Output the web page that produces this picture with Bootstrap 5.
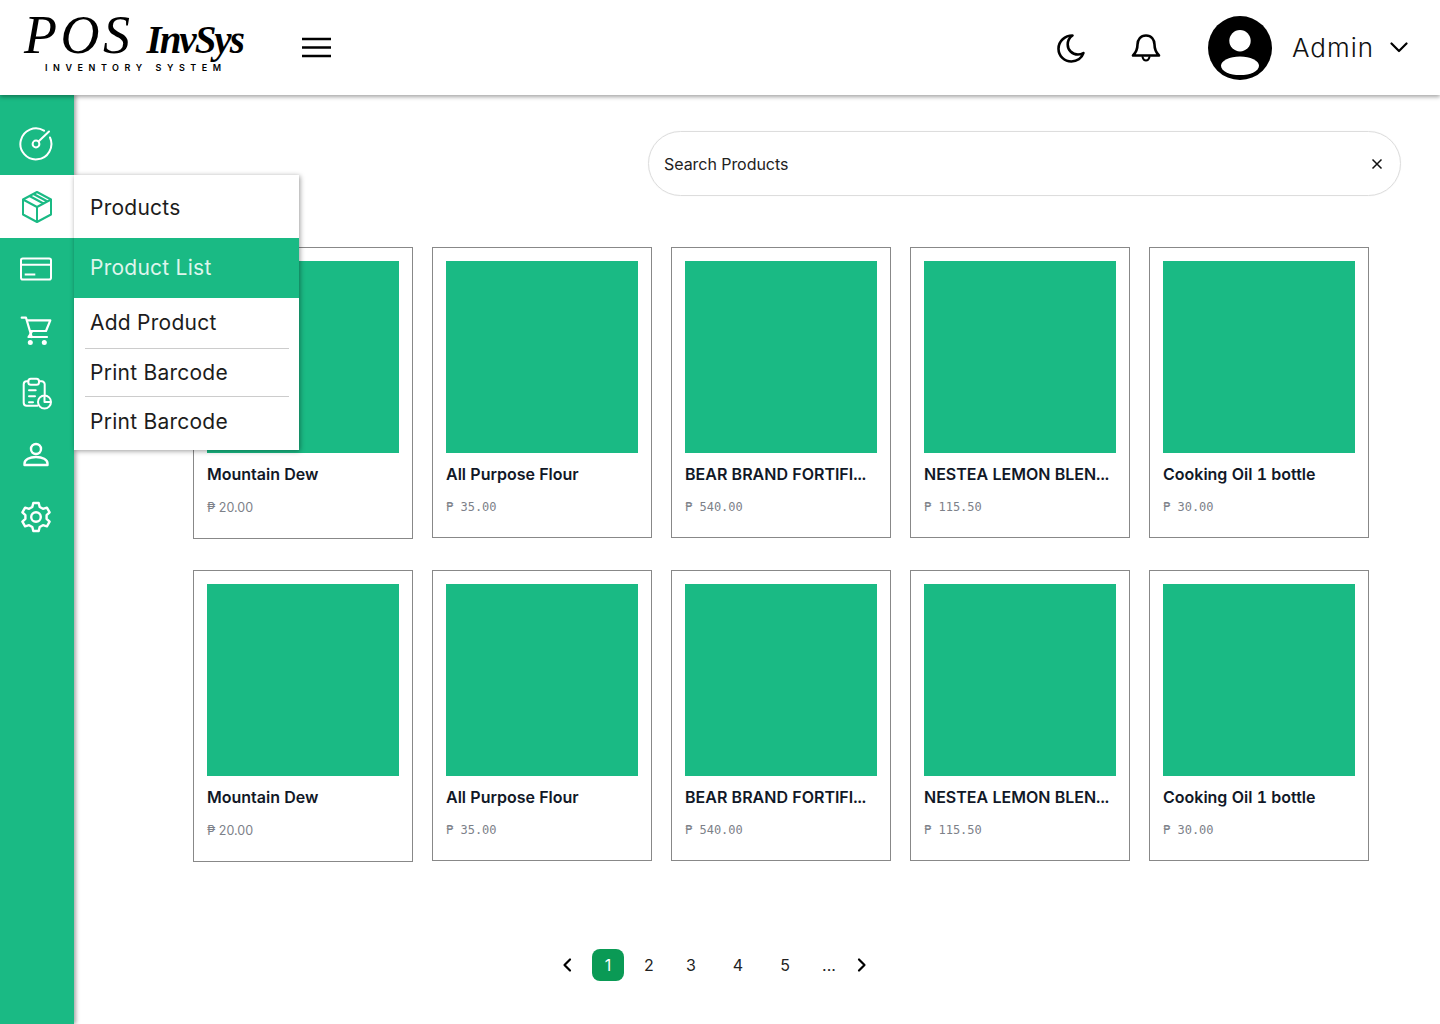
<!DOCTYPE html>
<html lang="en">
<head>
  <meta charset="UTF-8" />
  <meta name="viewport" content="width=device-width, initial-scale=1.0"/>
  <title>POS InvSys - Products</title>
  <link href="https://cdn.jsdelivr.net/npm/bootstrap@5.3.2/dist/css/bootstrap.min.css" rel="stylesheet"/>
  <style>
    body {
      font-family: 'Inter', sans-serif;
      height: 1024px;
      overflow: hidden;
      background: #fff;
    }

    .top-bar {
      height: 95px;
      padding: 0 32px 0 24px;
      background: #fff;
      box-shadow: 0 2px 4px rgba(0,0,0,0.35);
      position: relative;
      z-index: 3;
      flex-wrap: nowrap;
    }

    .brand-box { width: 278px; color: #000; padding-bottom: 8px; }
    .brand-name {
      font-family: 'Liberation Serif', serif;
      font-style: italic;
      font-size: 54px;
      line-height: 40px;
      letter-spacing: 3.5px;
      white-space: nowrap;
    }
    .brand-name b { font-size: 39px; font-weight: 700; letter-spacing: -2px; margin-left: 13px; }
    .brand-tag {
      font-family: 'Inter', sans-serif;
      font-size: 9px;
      font-weight: 600;
      line-height: 11px;
      letter-spacing: 5.55px;
      margin: 2px 0 0 21px;
      white-space: nowrap;
    }

    .burger { width: 29px; height: 21px; display: block; }
    .top-icon { width: 32px; height: 32px; display: block; }
    .moon-gap { margin-right: 43px; }
    .bell-gap { margin-right: 46px; }
    .admin-name {
      font-family: 'Inter', sans-serif;
      font-size: 26px;
      font-weight: 300;
      letter-spacing: 1px;
      color: #111;
      margin: 0 16px 0 20px;
    }

    .side-rail {
      width: 74px;
      height: 929px;
      flex-shrink: 0;
      padding-top: 18px;
      background: #1aba84;
      box-shadow: 2px 0 4px rgba(0,0,0,0.35);
      position: relative;
      z-index: 2;
    }
    .rail-item {
      height: 62px;
      padding-right: 2px;
      color: #fff;
    }
    .rail-item.is-active { height: 63px; background: #fff; color: #1aba84; }
    .rail-item svg { width: 34px; height: 34px; }

    .side-menu.dropdown-menu {
      display: block;
      position: absolute;
      left: 74px;
      top: 80px;
      width: 225px;
      height: 275px;
      padding: 0;
      margin: 0;
      border: 0;
      border-radius: 0;
      box-shadow: 1px 1px 5px rgba(0,0,0,0.4);
      z-index: 4;
    }
    .side-menu .dropdown-item {
      font-family: 'Inter', sans-serif;
      font-size: 21px;
      font-weight: 400;
      letter-spacing: .25px;
      color: #1c1c1c;
      padding: 0 16px;
    }
    .side-menu .menu-head { height: 63px; line-height: 65px; }
    .side-menu .dropdown-item.active { height: 60px; line-height: 60px; background: #1aba84; color: #dff5ec; }
    .side-menu .row-add { height: 50px; line-height: 50px; }
    .side-menu .row-print { height: 47px; line-height: 47px; }
    .side-menu .row-last { height: 53px; line-height: 50px; }
    .side-menu .dropdown-divider { margin: 0 10px 0 11px; border-color: #ccc; opacity: 1; }

    .main-area { padding: 36px 39px 0 119px; }

    .search-pill {
      width: 753px;
      height: 65px;
      padding: 0 16px 0 15px;
      margin-bottom: 51px;
      border: 1px solid #ddd;
      border-radius: 33px;
      box-shadow: 0 0 1px rgba(0,0,0,0.1);
      font-size: 16px;
      letter-spacing: -.05px;
      color: #222;
      align-self: flex-end;
    }
    .search-pill svg { width: 12px; height: 12px; margin-right: 1px; }

    .item-grid {
      display: grid;
      grid-template-columns: repeat(5, 220px);
      column-gap: 19px;
      row-gap: 31px;
      align-items: start;
    }
    .item-box {
      padding: 13px 13px 21px;
      border: 1px solid #888;
      border-radius: 0;
    }
    .item-pic { height: 192px; background: #1aba84; }
    .item-title {
      margin: 10px 0 13px;
      font-size: 16px;
      font-weight: 600;
      line-height: 22px;
      letter-spacing: 0;
      font-feature-settings: "tnum";
      color: #111827;
      white-space: nowrap;
    }
    .item-price {
      font-family: 'DejaVu Sans Mono', monospace;
      font-size: 12px;
      line-height: 18px;
      color: #7d8189;
    }
    .item-price.plain {
      font-family: 'Inter', sans-serif;
      font-size: 12.5px;
      line-height: 19px;
    }

    .pager-row { margin: 87px 0 0 358px; }
    .pager-row .page-item .page-link {
      display: flex;
      align-items: center;
      justify-content: center;
      width: 32px;
      height: 32px;
      margin-left: 0;
      padding: 0;
      border: 0;
      border-radius: 8px;
      background: none;
      font-size: 16px;
      color: #222;
    }
    .pager-row .page-item.active .page-link { background: #0a9a55; color: #fff; }
    .pager-row svg { width: 16px; height: 16px; }
    .gap-a { margin-right: 9px; }
    .gap-b { margin-right: 10px; }
    .gap-c { margin-right: 15px; }
    .gap-d { margin-right: 12px; }
    .gap-e { margin-right: 1px; }
  </style>
</head>
<body>

  <nav class="navbar top-bar d-flex align-items-center">
    <div class="brand-box">
      <div class="brand-name">POS<b>InvSys</b></div>
      <div class="brand-tag">INVENTORY SYSTEM</div>
    </div>
    <svg class="burger" viewBox="0 0 29 21" fill="none" stroke="#000" stroke-width="2.4"><path d="M0 2h29M0 10.500h29M0 19h29"/></svg>

    <div class="ms-auto d-flex align-items-center">
      <svg class="top-icon moon-gap" viewBox="0 0 32 32" fill="none" stroke="#000" stroke-width="2.600" stroke-linejoin="round" stroke-linecap="round"><path d="M17.500 3.500C10 3.500 3.500 9 3.500 16.700 3.500 24 9.500 29.500 16.400 29.500c5.500 0 10.300-3.200 12-8.500-1.700 1-3.500 1.500-5.400 1.500-6 0-10.300-4.600-10.300-10 0-3.500 1.800-7 4.800-9z"/></svg>
      <svg class="top-icon bell-gap" viewBox="0 0 32 32" fill="none" stroke="#000" stroke-width="2.600" stroke-linejoin="round" stroke-linecap="round"><path d="M16 3.500c-5.500 0-8.500 4.300-8.500 9 0 6-2 8.500-4.500 11h26c-2.500-2.500-4.500-5-4.500-11 0-4.700-3-9-8.500-9z"/><path d="M12.500 25c.6 2.300 2 3.500 3.500 3.500s2.900-1.200 3.500-3.500" stroke-width="2"/></svg>
      <svg width="64" height="64" viewBox="0 0 64 64"><circle cx="32" cy="32" r="32" fill="#000"/><circle cx="32" cy="24.700" r="10.700" fill="#fff"/><ellipse cx="32" cy="49.800" rx="19" ry="9.300" fill="#fff"/></svg>
      <span class="admin-name">Admin</span>
      <svg width="18" height="11" viewBox="0 0 18 11" fill="none" stroke="#000" stroke-width="2.200" stroke-linecap="round" stroke-linejoin="round"><path d="M1.500 1.500 9 9l7.500-7.500"/></svg>
    </div>
  </nav>

  <div class="d-flex position-relative">
    <aside class="side-rail d-flex flex-column">
      <div class="rail-item d-flex align-items-center justify-content-center">
        <svg viewBox="0 0 34 34" fill="none" stroke="currentColor" stroke-width="2" stroke-linecap="round"><path d="M25 3.700A15.500 15.500 0 1 0 31 10.500"/><circle cx="17" cy="17" r="3.400"/><path d="M19.500 14.500 30 4.500"/></svg>
      </div>
      <div class="rail-item is-active d-flex align-items-center justify-content-center">
        <svg viewBox="0 0 34 34" fill="none" stroke="currentColor" stroke-width="2" stroke-linejoin="round"><path d="M18 2 32 9.500v15L18 32 4 24.500v-15z"/><path d="M4 9.500 18 17l14-7.500M18 17v15M10.500 6l14 7.500M14.500 4l14 7.500"/></svg>
      </div>
      <div class="rail-item d-flex align-items-center justify-content-center">
        <svg viewBox="0 0 34 34" fill="none" stroke="currentColor" stroke-width="2" stroke-linejoin="round"><rect x="2" y="6.500" width="30" height="21" rx="1.800"/><path d="M2 12.700h30M5.700 22.500h10.600"/></svg>
      </div>
      <div class="rail-item d-flex align-items-center justify-content-center">
        <svg viewBox="0 0 34 34" fill="none" stroke="currentColor" stroke-width="2.200" stroke-linecap="round" stroke-linejoin="round"><path d="M2.700 3.700H7l5.700 19.300"/><path d="M8.700 6.300h22.600L27 17H11.700"/><path d="M12.700 18 9.500 23H28"/><circle cx="11.300" cy="28.500" r="2.500" fill="currentColor" stroke="none"/><circle cx="25.300" cy="28.500" r="2.500" fill="currentColor" stroke="none"/></svg>
      </div>
      <div class="rail-item d-flex align-items-center justify-content-center">
        <svg viewBox="0 0 34 34" fill="none" stroke="currentColor" stroke-width="2" stroke-linecap="round" stroke-linejoin="round"><path d="M9.300 5.300H7.700a3 3 0 0 0-3 3v18.400a3 3 0 0 0 3 3h10.600M20 5.300h2.700a3 3 0 0 1 3 3v10"/><rect x="9.300" y="2.700" width="10.700" height="6" rx="2.500"/><path d="M10 14.300h6.700M10 20.300h6M10 26.300h4"/><circle cx="25.500" cy="26" r="6.500"/><path d="M25.500 20.500V26h5.500"/></svg>
      </div>
      <div class="rail-item d-flex align-items-center justify-content-center">
        <svg viewBox="0 0 34 34" fill="none" stroke="currentColor" stroke-width="2.400" stroke-linejoin="round"><circle cx="17" cy="11" r="5"/><path d="M5.500 27v-1.500c0-4 5-6.500 11.500-6.500s11.500 2.500 11.500 6.500V27z"/></svg>
      </div>
      <div class="rail-item d-flex align-items-center justify-content-center">
        <svg viewBox="0 0 34 34" fill="none" stroke="currentColor" stroke-width="2.400" stroke-linejoin="round"><circle cx="17" cy="17" r="4.800"/><path d="M14.300 3h5.400l1 4 3.200 1.800 4-1.200 2.700 4.700-3 2.900v3.600l3 2.900-2.700 4.700-4-1.200-3.200 1.800-1 4h-5.400l-1-4-3.200-1.800-4 1.200-2.700-4.700 3-2.900v-3.600l-3-2.900 2.700-4.700 4 1.200L13.300 7z"/></svg>
      </div>
    </aside>

    <div class="dropdown-menu side-menu">
      <a class="dropdown-item menu-head" href="#">Products</a>
      <a class="dropdown-item active" href="#">Product List</a>
      <a class="dropdown-item row-add" href="#">Add Product</a>
      <hr class="dropdown-divider">
      <a class="dropdown-item row-print" href="#">Print Barcode</a>
      <hr class="dropdown-divider">
      <a class="dropdown-item row-last" href="#">Print Barcode</a>
    </div>

    <main class="main-area flex-grow-1 d-flex flex-column">
      <div class="search-pill d-flex align-items-center justify-content-between">
        <span>Search Products</span>
        <svg viewBox="0 0 12 12" fill="none" stroke="#111" stroke-width="1.500"><path d="m1.500 1.500 9 9M10.500 1.500l-9 9"/></svg>
      </div>

      <div class="item-grid" id="itemGrid"></div>

      <ul class="pagination pager-row mb-0">
        <li class="page-item gap-a"><a class="page-link" href="#"><svg viewBox="0 0 16 16" fill="none" stroke="#000" stroke-width="2.200" stroke-linecap="round" stroke-linejoin="round"><path d="M11 2.500 5.500 8l5.500 5.500"/></svg></a></li>
        <li class="page-item active gap-a"><a class="page-link" href="#">1</a></li>
        <li class="page-item gap-b"><a class="page-link" href="#">2</a></li>
        <li class="page-item gap-c"><a class="page-link" href="#">3</a></li>
        <li class="page-item gap-c"><a class="page-link" href="#">4</a></li>
        <li class="page-item gap-d"><a class="page-link" href="#">5</a></li>
        <li class="page-item gap-e"><a class="page-link" href="#">...</a></li>
        <li class="page-item"><a class="page-link" href="#"><svg viewBox="0 0 16 16" fill="none" stroke="#000" stroke-width="2.200" stroke-linecap="round" stroke-linejoin="round"><path d="M5 2.500 10.500 8 5 13.500"/></svg></a></li>
      </ul>
    </main>
  </div>

  <script src="https://cdn.jsdelivr.net/npm/bootstrap@5.3.2/dist/js/bootstrap.bundle.min.js"></script>
  <script>
    const products = [
      { name: "Mountain Dew", price: "20.00", plain: true },
      { name: "All Purpose Flour", price: "35.00" },
      { name: "BEAR BRAND FORTIFI...", price: "540.00" },
      { name: "NESTEA LEMON BLEN...", price: "115.50" },
      { name: "Cooking Oil 1 bottle", price: "30.00" }
    ];

    let html = "";
    for (let row = 0; row < 2; row++) {
      products.forEach(p => {
        html += `<div class="card item-box">
          <div class="item-pic"></div>
          <div class="item-title">${p.name}</div>
          <div class="item-price ${p.plain ? "plain" : ""}">₱ ${p.price}</div>
        </div>`;
      });
    }
    document.getElementById("itemGrid").innerHTML = html;
  </script>

</body>
</html>
